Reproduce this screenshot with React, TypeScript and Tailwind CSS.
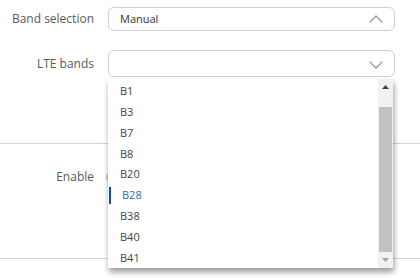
import React from "react";

const Chevron = ({ up }: { up?: boolean }) => (
  <svg width="14" height="8" viewBox="0 0 14 8" fill="none">
    <path
      d={up ? "M1 7 L7 1 L13 7" : "M1 1 L7 7 L13 1"}
      stroke="#9a9a9a"
      strokeWidth="1.3"
      strokeLinecap="round"
      strokeLinejoin="round"
    />
  </svg>
);

const items = ["B1", "B3", "B7", "B8", "B20", "B28", "B38", "B40", "B41"];

export default function App() {
  return (
    <div
      className="relative w-[420px] h-[278px] overflow-hidden bg-white"
      style={{ fontFamily: '"Open Sans", "Liberation Sans", sans-serif' }}
    >
      <div className="pt-[7px]">
        <div className="flex items-center h-[24px]">
          <div className="w-[94px] text-right text-[12px] text-[#5a5a5a]">Band selection</div>
          <div className="ml-[14px] w-[287px] h-[24px] rounded-[6px] border border-[#cfcfcf] flex items-center justify-between pl-[11px] pr-[11px]">
            <span className="text-[11px] text-[#333]">Manual</span>
            <Chevron up />
          </div>
        </div>
        <div className="flex items-center h-[27px] mt-[19px]">
          <div className="w-[94px] text-right text-[12px] text-[#5a5a5a]">LTE bands</div>
          <div className="ml-[14px] w-[287px] h-[27px] rounded-[6px] border border-[#cfcfcf] flex items-end justify-end pr-[11px] pb-[7px]">
            <Chevron />
          </div>
        </div>
        <div className="mt-[66px] border-t border-[#d4d4d4] h-[115px]">
          <div className="flex items-center mt-[24px]">
            <div className="w-[94px] text-right text-[12px] text-[#5a5a5a]">Enable</div>
            <div className="ml-[12px] w-[4px] h-[8px] rounded-l-[4px] bg-[#c8c8c8]" />
          </div>
        </div>
        <div className="border-t border-[#d4d4d4]" />
      </div>

      <div className="absolute left-[108px] top-[79px] w-[285px] h-[189px] bg-white flex shadow-[1px_4px_6px_rgba(0,0,0,0.4)]">
        <div className="flex-1 pt-[2px]">
          {items.map((b) => {
            const sel = b === "B28";
            return (
              <div key={b} className="relative h-[20.8px] flex items-center">
                {sel && <div className="absolute left-[1px] top-[2px] w-[2px] h-[17px] bg-[#0b4dab]" />}
                <span
                  className={
                    sel
                      ? "pl-[14px] text-[11px] text-[#2a6bc0]"
                      : "pl-[12px] text-[11px] text-[#444]"
                  }
                >
                  {b}
                </span>
              </div>
            );
          })}
        </div>
        <div className="w-[15px] h-full bg-[#f1f1f1] flex flex-col">
          <div className="h-[16px] flex items-center justify-center">
            <svg width="7" height="4" viewBox="0 0 7 4">
              <path d="M0 4 L3.5 0 L7 4 Z" fill="#404040" />
            </svg>
          </div>
          <div className="h-[12px]" />
          <div className="mx-[1px] h-[145px] bg-[#c1c1c1]" />
          <div className="flex-1 flex items-center justify-center">
            <svg width="7" height="4" viewBox="0 0 7 4">
              <path d="M0 0 L7 0 L3.5 4 Z" fill="#a3a3a3" />
            </svg>
          </div>
        </div>
      </div>
    </div>
  );
}
